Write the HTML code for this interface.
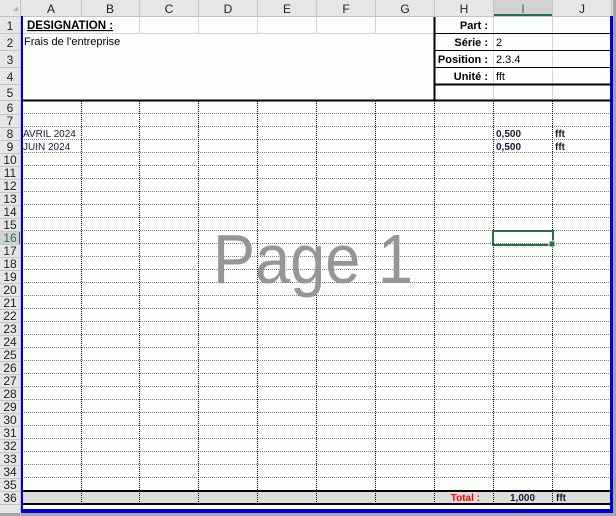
<!DOCTYPE html>
<html><head><meta charset="utf-8"><style>
html,body{margin:0;padding:0;background:#a6a6a6;}
svg{display:block;font-family:"Liberation Sans",Arial,sans-serif;}
</style></head><body>
<svg width="616" height="516" viewBox="0 0 616 516" xmlns="http://www.w3.org/2000/svg">
<defs>
<pattern id="hd" x="0" y="101" width="2" height="13" patternUnits="userSpaceOnUse">
<rect x="0" y="12.5" width="1" height="1" fill="#000"/>
</pattern>
</defs>
<!-- backgrounds -->
<rect x="0" y="0" width="613" height="516" fill="#a6a6a6"/>
<rect x="0" y="0" width="613" height="16" fill="#e6e6e6"/>
<rect x="0" y="0" width="21" height="516" fill="#e6e6e6"/>
<rect x="22" y="17" width="589" height="492" fill="#fdfffd"/>
<rect x="493" y="0" width="59" height="16" fill="#d2d2d2"/>
<rect x="493" y="14" width="59" height="2" fill="#217346"/>
<rect x="0" y="231" width="21" height="13" fill="#d2d2d2"/>
<rect x="19" y="231" width="2" height="13" fill="#217346"/>
<rect x="22" y="491" width="589" height="13" fill="#dcdcdc"/>
<rect x="0" y="513" width="613" height="3" fill="#a6a6a6"/>
<rect x="22" y="509" width="591" height="4" fill="#e6e6e6"/>
<!-- header lines -->
<g stroke="#c4c4c4" stroke-width="1">
<line x1="0" y1="16.5" x2="613" y2="16.5"/>
<line x1="20.5" y1="0" x2="20.5" y2="516"/>
<line x1="81.5" y1="0" x2="81.5" y2="16"/><line x1="139.5" y1="0" x2="139.5" y2="16"/>
<line x1="198.5" y1="0" x2="198.5" y2="16"/><line x1="257.5" y1="0" x2="257.5" y2="16"/>
<line x1="316.5" y1="0" x2="316.5" y2="16"/><line x1="375.5" y1="0" x2="375.5" y2="16"/>
<line x1="434.5" y1="0" x2="434.5" y2="16"/><line x1="493.5" y1="0" x2="493.5" y2="16"/>
<line x1="552.5" y1="0" x2="552.5" y2="16"/><line x1="611.5" y1="0" x2="611.5" y2="16"/>
<line x1="0" y1="33.5" x2="21" y2="33.5"/><line x1="0" y1="50.5" x2="21" y2="50.5"/>
<line x1="0" y1="67.5" x2="21" y2="67.5"/><line x1="0" y1="84.5" x2="21" y2="84.5"/>
<line x1="0" y1="100.5" x2="21" y2="100.5"/>
</g>
<path d="M0 114.5H21M0 127.5H21M0 140.5H21M0 153.5H21M0 166.5H21M0 179.5H21M0 192.5H21M0 205.5H21M0 218.5H21M0 231.5H21M0 244.5H21M0 257.5H21M0 270.5H21M0 283.5H21M0 296.5H21M0 309.5H21M0 322.5H21M0 335.5H21M0 348.5H21M0 361.5H21M0 374.5H21M0 387.5H21M0 400.5H21M0 413.5H21M0 426.5H21M0 439.5H21M0 452.5H21M0 465.5H21M0 478.5H21M0 491.5H21M0 504.5H21" stroke="#c4c4c4"/>
<polygon points="13,11 18,6 18,11" fill="#b4b4b4"/>
<!-- top block light grid -->
<g stroke="#d4d4d4">
<line x1="22" y1="33.5" x2="434" y2="33.5"/>
<line x1="139.5" y1="17" x2="139.5" y2="33"/><line x1="198.5" y1="17" x2="198.5" y2="33"/>
<line x1="257.5" y1="17" x2="257.5" y2="33"/><line x1="316.5" y1="17" x2="316.5" y2="33"/>
<line x1="375.5" y1="17" x2="375.5" y2="33"/>
<line x1="493.5" y1="17" x2="493.5" y2="84"/><line x1="552.5" y1="17" x2="552.5" y2="100"/>
<line x1="493.5" y1="86" x2="493.5" y2="100"/>
<line x1="22" y1="504.5" x2="611" y2="504.5"/>
</g>
<!-- dotted grid -->
<rect x="22" y="102" width="589" height="389" fill="url(#hd)"/>
<g stroke="#000" stroke-width="1" stroke-dasharray="1,1">
<line x1="81.5" y1="101" x2="81.5" y2="504"/><line x1="139.5" y1="101" x2="139.5" y2="504"/>
<line x1="198.5" y1="101" x2="198.5" y2="504"/><line x1="257.5" y1="101" x2="257.5" y2="504"/>
<line x1="316.5" y1="101" x2="316.5" y2="504"/><line x1="375.5" y1="101" x2="375.5" y2="504"/>
<line x1="434.5" y1="101" x2="434.5" y2="504"/><line x1="493.5" y1="101" x2="493.5" y2="504"/>
<line x1="552.5" y1="101" x2="552.5" y2="504"/>
</g>
<!-- solid block lines -->
<g stroke="#000">
<line x1="434" y1="33.5" x2="611" y2="33.5"/><line x1="434" y1="50.5" x2="611" y2="50.5"/>
<line x1="434" y1="67.5" x2="611" y2="67.5"/>
<line x1="434" y1="84.5" x2="611" y2="84.5" stroke-width="2"/>
<line x1="434.5" y1="17" x2="434.5" y2="100" stroke-width="2"/>
<line x1="22" y1="100.5" x2="611" y2="100.5" stroke-width="2"/>
<line x1="22" y1="491" x2="611" y2="491" stroke-width="2"/>
<line x1="22" y1="504" x2="611" y2="504" stroke-width="2"/>
</g>
<!-- blue page border -->
<rect x="21" y="16" width="2" height="495" fill="#0000e0"/>
<rect x="610" y="16" width="3" height="497" fill="#0000e0"/>
<rect x="21" y="509" width="592" height="4" fill="#0000e0"/>
<!-- Page 1 watermark -->
<text x="213" y="283" font-size="70" fill="#969696" textLength="200" lengthAdjust="spacingAndGlyphs">Page 1</text>
<!-- selection -->
<rect x="493" y="231" width="60" height="14" fill="none" stroke="#217346" stroke-width="2"/>
<rect x="549" y="241" width="6" height="6" fill="#217346" stroke="#fff" stroke-width="1"/>
<!-- column headers -->
<g font-size="12" fill="#222" text-anchor="middle">
<text x="51" y="13">A</text><text x="110" y="13">B</text><text x="169" y="13">C</text>
<text x="228" y="13">D</text><text x="287" y="13">E</text><text x="346" y="13">F</text>
<text x="405" y="13">G</text><text x="464" y="13">H</text><text x="523" y="13" fill="#217346">I</text>
<text x="582" y="13">J</text>
</g>
<!-- row headers -->
<g font-size="12" fill="#222" text-anchor="middle">
<text x="10" y="30">1</text><text x="10" y="47">2</text><text x="10" y="64">3</text><text x="10" y="81">4</text><text x="10" y="97">5</text>
<text x="10" y="112">6</text><text x="10" y="125">7</text><text x="10" y="138">8</text><text x="10" y="151">9</text>
<text x="10" y="164">10</text><text x="10" y="177">11</text><text x="10" y="190">12</text><text x="10" y="203">13</text>
<text x="10" y="216">14</text><text x="10" y="229">15</text><text x="10" y="242" fill="#217346">16</text><text x="10" y="255">17</text>
<text x="10" y="268">18</text><text x="10" y="281">19</text><text x="10" y="294">20</text><text x="10" y="307">21</text>
<text x="10" y="320">22</text><text x="10" y="333">23</text><text x="10" y="346">24</text><text x="10" y="359">25</text>
<text x="10" y="372">26</text><text x="10" y="385">27</text><text x="10" y="398">28</text><text x="10" y="411">29</text>
<text x="10" y="424">30</text><text x="10" y="437">31</text><text x="10" y="450">32</text><text x="10" y="463">33</text>
<text x="10" y="476">34</text><text x="10" y="489">35</text><text x="10" y="502">36</text>
</g>
<!-- cell text -->
<text x="27" y="29" font-size="11.5" font-weight="bold" fill="#000" text-decoration="underline">DESIGNATION :</text>
<text x="24" y="45" font-size="11" fill="#000">Frais de l'entreprise</text>
<g font-size="11" font-weight="bold" fill="#000" text-anchor="end">
<text x="488" y="29">Part :</text><text x="488" y="46">Série :</text>
<text x="488" y="63">Position :</text><text x="488" y="80">Unité :</text>
</g>
<g font-size="11" fill="#000">
<text x="496" y="46">2</text><text x="496" y="63">2.3.4</text><text x="496" y="80">fft</text>
</g>
<g font-size="10" fill="#1a1a3a">
<text x="23" y="137">AVRIL 2024</text><text x="23" y="150">JUIN 2024</text>
</g>
<g font-size="10" font-weight="bold" fill="#1a1a3a">
<text x="496" y="137">0,500</text><text x="555" y="137">fft</text>
<text x="496" y="150">0,500</text><text x="555" y="150">fft</text>
<text x="510" y="501">1,000</text><text x="556" y="501">fft</text>
</g>
<text x="480" y="501" font-size="10" font-weight="bold" fill="#ff0000" text-anchor="end">Total :</text>
</svg>
</body></html>
